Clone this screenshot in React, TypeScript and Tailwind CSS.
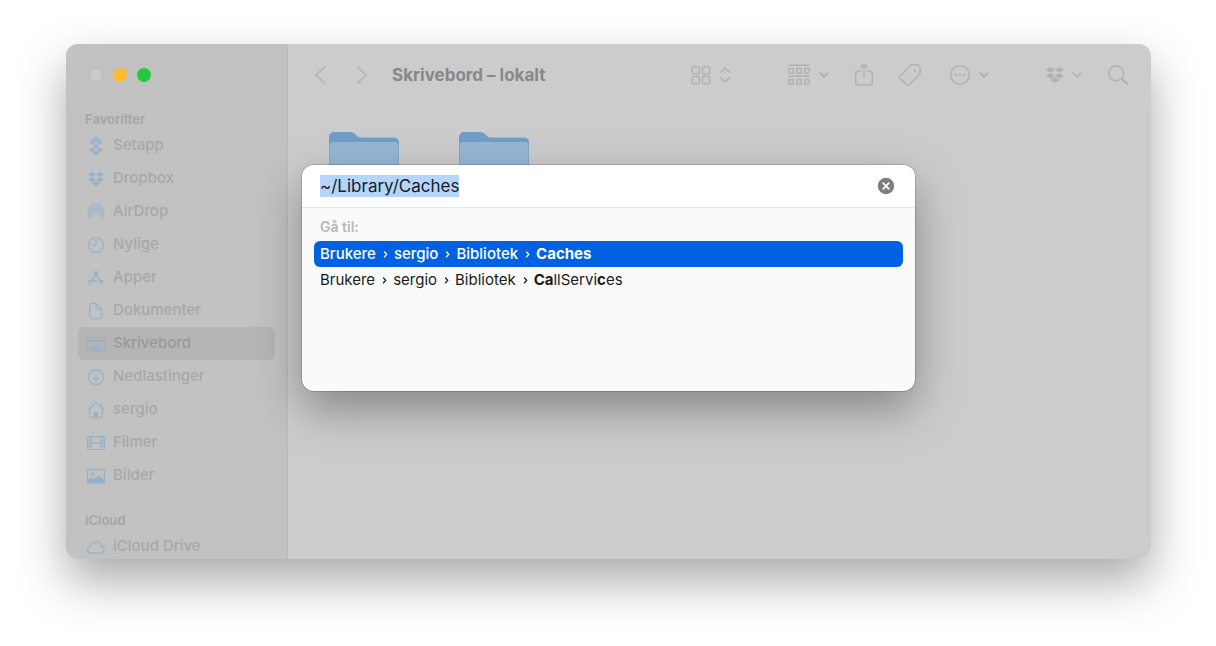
import { useEffect, useRef, useState } from "react";
import type { ReactNode } from "react";

type IconProps = { children: ReactNode; viewBox?: string; className?: string };

function Icon({ children, viewBox = "0 0 20 20", className = "h-5 w-5" }: IconProps) {
  return (
    <svg
      viewBox={viewBox}
      className={`shrink-0 ${className}`}
      fill="none"
      stroke="currentColor"
      strokeWidth="1.2"
      strokeLinecap="round"
      strokeLinejoin="round"
      aria-hidden="true"
    >
      {children}
    </svg>
  );
}

const SetappIcon = () => (
  <Icon>
    <g fill="currentColor" stroke="none">
      <path d="M10 0.5l2.8 2.7L10 5.9 7.2 3.200z" />
      <path d="M6.400 3.600l2.800 2.700L6.400 9 3.600 6.300z" />
      <path d="M13.600 3.600l2.800 2.700L13.600 9l-2.800-2.700z" />
      <path d="M10 7.300l2.800 2.700L10 12.700 7.200 10z" />
      <path d="M6.400 11l2.800 2.700-2.800 2.700-2.800-2.700z" />
      <path d="M13.600 11l2.800 2.700-2.800 2.700-2.800-2.700z" />
      <path d="M10 14.100l2.800 2.700-2.800 2.700-2.800-2.700z" />
    </g>
  </Icon>
);

const DropboxIcon = ({ className = "h-5 w-5" }: { className?: string }) => (
  <Icon className={className}>
    <g fill="currentColor" stroke="none">
      <path d="M6 2.700l4 2.600-4 2.600-4.400-2.600z" />
      <path d="M14 2.700l4.400 2.600L14 7.900l-4-2.600z" />
      <path d="M6 8.200l4 2.600-4 2.600-4.400-2.600z" />
      <path d="M14 8.200l4.400 2.600-4.400 2.600-4-2.600z" />
      <path d="M10 12l4.200 2.600-4.200 2.700-4.200-2.700z" />
    </g>
  </Icon>
);

const AirDropIcon = () => (
  <Icon>
    <g strokeWidth="1.1">
      <path d="M5.300 16.600a8 8 0 1 1 9.400 0" />
      <path d="M6.400 14.400a5.600 5.600 0 1 1 7.200 0" />
      <path d="M7.800 12.400a3.200 3.200 0 1 1 4.400 0" />
    </g>
    <circle cx="10" cy="10.200" r="1.200" fill="currentColor" stroke="none" />
  </Icon>
);

const ClockIcon = () => (
  <Icon>
    <circle cx="10" cy="10" r="7.400" />
    <path d="M10 5.500V10H6.300" />
  </Icon>
);

const AppsIcon = () => (
  <Icon>
    <g strokeWidth="1.700">
      <path d="M8.600 3.800l7.300 12.400" />
      <path d="M11.400 3.800L5.900 13" />
      <path d="M2.700 13h8.200M14.600 13h2.700" />
      <path d="M4.600 15.300l-.4.700" />
    </g>
  </Icon>
);

const DocumentIcon = () => (
  <Icon>
    <path d="M5.700 2.400H10l5.900 5.900v7.500a1.800 1.800 0 0 1-1.800 1.800H5.700a1.800 1.800 0 0 1-1.800-1.800V4.200a1.800 1.800 0 0 1 1.800-1.800z" />
    <path d="M10.200 2.700v4.400a1.200 1.200 0 0 0 1.200 1.200h4.300" />
  </Icon>
);

const DesktopIcon = () => (
  <Icon>
    <rect x="1.500" y="3.500" width="17" height="13.300" rx="1.800" />
    <path d="M1.700 6.600h16.600" />
    <path d="M5 13.200h10v1.800H5z" fill="currentColor" strokeWidth="0.600" />
  </Icon>
);

const DownloadsIcon = () => (
  <Icon>
    <circle cx="10" cy="10" r="7.400" />
    <path d="M10 6.200v7.400M7.500 11.200l2.500 2.500 2.500-2.500" />
  </Icon>
);

const HomeIcon = () => (
  <Icon>
    <path d="M1.800 9.800L10 2.400l8.200 7.400" />
    <path d="M3.800 8.500v8a1 1 0 0 0 1 1h10.400a1 1 0 0 0 1-1v-8M15.600 7V3.900" />
    <path d="M8.400 17.300v-4.700h3.200v4.700z" fill="currentColor" />
  </Icon>
);

const FilmIcon = () => (
  <Icon>
    <rect x="1.600" y="3.700" width="16.800" height="12.800" rx="1" />
    <path d="M5 3.700v12.800M15 3.700v12.800M5 10.100h10M1.800 7h3M1.800 10.100h3M1.800 13.300h3M15 7h3M15 10.100h3M15 13.300h3" />
  </Icon>
);

const PicturesIcon = () => (
  <Icon>
    <rect x="1.600" y="3.400" width="16.800" height="13.400" rx="1.600" />
    <circle cx="6.800" cy="7.900" r="1.700" fill="currentColor" stroke="none" />
    <path
      d="M2 14l3.300-2.600 2.500 1.800 4.800-4 5.700 4.800v1.800a1 1 0 0 1-1 1H3a1 1 0 0 1-1-1z"
      fill="currentColor"
      stroke="none"
    />
  </Icon>
);

const CloudIcon = () => (
  <Icon>
    <path
      d="M5 16.100a3.500 3.500 0 0 1-1.200-6.800 2.600 2.600 0 0 1 3.300-2.600 4.600 4.600 0 0 1 8.400 2.200 3.700 3.700 0 0 1-.5 7.200z"
      strokeWidth="1.100"
    />
  </Icon>
);

const ChevronDown = () => (
  <Icon viewBox="0 0 10 10" className="h-2.5 w-2.5">
    <path d="M1.200 3.100L5 6.900l3.800-3.800" strokeWidth="1.800" />
  </Icon>
);

type Place = { name: string; icon: () => ReactNode };

const favorites: Place[] = [
  { name: "Setapp", icon: SetappIcon },
  { name: "Dropbox", icon: DropboxIcon },
  { name: "AirDrop", icon: AirDropIcon },
  { name: "Nylige", icon: ClockIcon },
  { name: "Apper", icon: AppsIcon },
  { name: "Dokumenter", icon: DocumentIcon },
  { name: "Skrivebord", icon: DesktopIcon },
  { name: "Nedlastinger", icon: DownloadsIcon },
  { name: "sergio", icon: HomeIcon },
  { name: "Filmer", icon: FilmIcon },
  { name: "Bilder", icon: PicturesIcon },
];

const cloud: Place[] = [{ name: "iCloud Drive", icon: CloudIcon }];

function PlaceList({ title, places, active }: { title: string; places: Place[]; active?: string }) {
  return (
    <section>
      <h2 className="px-[7px] text-[13px] leading-[18px] font-semibold text-[#a5a5a5]">{title}</h2>
      <ul className="mt-px">
        {places.map(({ name, icon: PlaceIcon }) => (
          <li key={name}>
            <button
              type="button"
              className={`flex h-[33px] w-full items-center gap-[7px] rounded-md px-2 text-[15px] font-medium ${
                name === active ? "bg-[#b5b5b5] text-[#999999]" : "text-[#a8a8a8]"
              }`}
            >
              <span className="flex text-[#97b1ca]">
                <PlaceIcon />
              </span>
              {name}
            </button>
          </li>
        ))}
      </ul>
    </section>
  );
}

function Sidebar() {
  return (
    <aside className="flex w-[222px] shrink-0 flex-col overflow-hidden border-r border-[#bababa] bg-[#c2c2c2] px-3">
      <div className="flex h-[66px] shrink-0 items-center gap-2.5 px-[11px] pb-1">
        <button type="button" aria-label="Lukk" className="h-3.5 w-3.5 rounded-full border border-[#b9b9b9] bg-[#cacaca]" />
        <button type="button" aria-label="Minimer" className="h-3.5 w-3.5 rounded-full bg-[#fdbc2e]" />
        <button type="button" aria-label="Zoom" className="h-3.5 w-3.5 rounded-full bg-[#28c840]" />
      </div>
      <nav className="flex flex-col gap-[19px]">
        <PlaceList title="Favoritter" places={favorites} active="Skrivebord" />
        <PlaceList title="iCloud" places={cloud} />
      </nav>
    </aside>
  );
}

function Toolbar() {
  return (
    <header className="flex h-[62px] items-center pr-[22px] pl-[26px] text-[#b2b2b2]">
      <button type="button" aria-label="Tilbake">
        <Icon className="h-5 w-3" viewBox="0 0 12 20">
          <path d="M10.500 2L2 10l8.500 8" strokeWidth="1.600" />
        </Icon>
      </button>
      <button type="button" aria-label="Frem" className="ml-[30px]">
        <Icon className="h-5 w-3" viewBox="0 0 12 20">
          <path d="M1.500 2L10 10l-8.500 8" strokeWidth="1.600" />
        </Icon>
      </button>
      <h1 className="ml-6 text-[17px] leading-[26px] font-bold whitespace-nowrap text-[#888888]">Skrivebord – lokalt</h1>

      <button type="button" aria-label="Visning" className="ml-auto flex items-center gap-2">
        <Icon>
          <g strokeWidth="1.500">
            <rect x="1.200" y="1.700" width="7.200" height="7.200" rx="1.300" />
            <rect x="11.400" y="1.700" width="7.200" height="7.200" rx="1.300" />
            <rect x="1.200" y="11.600" width="7.200" height="7.200" rx="1.300" />
            <rect x="11.400" y="11.600" width="7.200" height="7.200" rx="1.300" />
          </g>
        </Icon>
        <Icon viewBox="0 0 12 20" className="h-5 w-3">
          <path d="M1.800 7.100L6 3l4.200 4.100M1.800 12.900L6 17l4.200-4.100" strokeWidth="1.700" />
        </Icon>
      </button>
      <button type="button" aria-label="Grupper" className="ml-14 flex items-center gap-2">
        <Icon viewBox="0 0 24 22" className="h-[22px] w-6">
          <path d="M1.800 1.200h20.400M1.800 12.200h20.400" strokeWidth="1.500" />
          <g strokeWidth="1.500">
            <rect x="1.700" y="4.600" width="4.600" height="4.600" rx="1" />
            <rect x="9.700" y="4.600" width="4.600" height="4.600" rx="1" />
            <rect x="17.700" y="4.600" width="4.600" height="4.600" rx="1" />
            <rect x="1.700" y="15.600" width="4.600" height="4.600" rx="1" />
            <rect x="9.700" y="15.600" width="4.600" height="4.600" rx="1" />
            <rect x="17.700" y="15.600" width="4.600" height="4.600" rx="1" />
          </g>
        </Icon>
        <ChevronDown />
      </button>
      <button type="button" aria-label="Del" className="ml-[25px]">
        <Icon viewBox="0 0 20 24" className="h-6 w-5">
          <path
            d="M6.500 8.300H4a2.300 2.300 0 0 0-2.300 2.300v9a2.300 2.300 0 0 0 2.300 2.300h12a2.300 2.300 0 0 0 2.300-2.300v-9A2.300 2.300 0 0 0 16 8.300h-2.500M10 14.300V1.600M6.500 4.900L10 1.400l3.500 3.500"
            strokeWidth="1.500"
          />
        </Icon>
      </button>
      <button type="button" aria-label="Etiketter" className="ml-6">
        <Icon viewBox="0 0 24 24" className="h-6 w-6">
          <path
            d="M1.900 13.500L12.600 2.600a2.400 2.400 0 0 1 1.700-.8h4.400a3.400 3.400 0 0 1 3.400 3.400v4a3 3 0 0 1-.8 2L11.200 21.700a1.500 1.500 0 0 1-2.200 0l-7.100-6.300a1.300 1.300 0 0 1 0-1.900z"
            strokeWidth="1.500"
          />
          <circle cx="17" cy="7.500" r="1.200" fill="currentColor" stroke="none" />
        </Icon>
      </button>
      <button type="button" aria-label="Handlinger" className="ml-[27px] flex items-center gap-2">
        <Icon viewBox="0 0 22 22" className="h-[22px] w-[22px]">
          <circle cx="11" cy="11" r="9.300" strokeWidth="1.500" />
          <g fill="currentColor" stroke="none">
            <circle cx="6.600" cy="11" r="1.200" />
            <circle cx="11" cy="11" r="1.200" />
            <circle cx="15.400" cy="11" r="1.200" />
          </g>
        </Icon>
        <ChevronDown />
      </button>
      <button type="button" aria-label="Dropbox" className="ml-[55px] flex items-center gap-1.5">
        <DropboxIcon className="h-[22px] w-[22px]" />
        <ChevronDown />
      </button>
      <button type="button" aria-label="Søk" className="ml-[25px]">
        <Icon viewBox="0 0 22 22" className="h-[22px] w-[22px]">
          <circle cx="9.300" cy="9.300" r="7.400" strokeWidth="1.600" />
          <path d="M14.800 14.800l5 5" strokeWidth="2.200" />
        </Icon>
      </button>
    </header>
  );
}

function Folder() {
  return (
    <svg viewBox="0 0 72 60" className="h-[60px] w-[72px]" aria-hidden="true">
      <path
        d="M1 5a5 5 0 0 1 5-5h16c3 0 4.500 1.400 6.300 3.300C29.700 4.800 31 5.500 33 5.500h33a5 5 0 0 1 5 5V55a5 5 0 0 1-5 5H6a5 5 0 0 1-5-5z"
        fill="#729dc8"
      />
      <path d="M1.500 14a4 4 0 0 1 4-4h61a4 4 0 0 1 4 4v41a5 5 0 0 1-5 5h-59a5 5 0 0 1-5-5z" fill="#97b7d6" />
    </svg>
  );
}

const parents = ["Brukere", "sergio", "Bibliotek"];

const results: { id: string; label: ReactNode }[] = [
  { id: "caches", label: <b className="font-bold">Caches</b> },
  {
    id: "callservices",
    label: (
      <>
        <b className="font-bold">Ca</b>llServi<b className="font-bold">c</b>es
      </>
    ),
  },
];

function GoToFolder() {
  const [path, setPath] = useState("~/Library/Caches");
  const input = useRef<HTMLInputElement>(null);

  useEffect(() => {
    input.current?.focus();
    input.current?.select();
  }, []);

  return (
    <div
      role="dialog"
      aria-label="Gå til mappe"
      className="absolute inset-x-0 top-[121px] mx-auto flex min-h-[226px] w-[613px] max-w-full flex-col overflow-hidden rounded-xl bg-[#fafafa] text-[#1b1b1b] shadow-[0_0_0_1px_rgba(0,0,0,0.14),0_18px_46px_rgba(0,0,0,0.34)]"
    >
      <div className="flex h-[43px] items-center border-b border-[#e6e6e6] bg-white pr-5 pl-[18px]">
        <input
          ref={input}
          aria-label="Bane"
          value={path}
          onChange={(event) => setPath(event.target.value)}
          className="min-w-0 flex-1 bg-transparent text-[17px] leading-[22px] outline-none selection:bg-[#b3d5ff] selection:text-[#1b1b1b]"
        />
        <button type="button" aria-label="Tøm" onClick={() => setPath("")}>
          <svg viewBox="0 0 18 18" className="h-[18px] w-[18px]" aria-hidden="true">
            <circle cx="9" cy="9" r="8.200" fill="#7d7e80" />
            <path d="M6.200 6.200l5.600 5.600M11.800 6.200l-5.600 5.600" stroke="#fff" strokeWidth="1.700" strokeLinecap="round" />
          </svg>
        </button>
      </div>
      <div className="px-3 pt-2">
        <h2 className="px-1.5 text-sm leading-[22px] font-semibold text-[#b8b8b8]">Gå til:</h2>
        <ul className="mt-[3px]">
          {results.map(({ id, label }, index) => (
            <li key={id}>
              <button
                type="button"
                className={`flex h-[26px] w-full items-center rounded-md px-1.5 text-[15px] ${
                  index === 0 ? "bg-[#0062e3] font-medium text-white" : ""
                }`}
              >
                {parents.map((parent) => (
                  <span key={parent} className="flex items-center">
                    {parent}
                    <Icon viewBox="0 0 18 10" className="h-2.5 w-[18px]">
                      <path d="M8.500 3l2.300 2.400-2.300 2.400" strokeWidth="1.300" />
                    </Icon>
                  </span>
                ))}
                <span>{label}</span>
              </button>
            </li>
          ))}
        </ul>
      </div>
    </div>
  );
}

export default function App() {
  return (
    <div className="h-screen overflow-hidden bg-white pt-11 pr-[65px] pb-[87px] pl-[66px] font-['Inter','Liberation_Sans',sans-serif]">
      <div className="h-full rounded-xl shadow-[0_22px_48px_rgba(0,0,0,0.34)]">
        <div className="relative flex h-full overflow-hidden rounded-xl bg-[#cccccc]">
          <Sidebar />
          <main className="min-w-0 flex-1">
            <Toolbar />
            <div className="flex gap-[58px] px-10 pt-[26px]">
              <Folder />
              <Folder />
            </div>
          </main>
          <GoToFolder />
        </div>
      </div>
    </div>
  );
}
